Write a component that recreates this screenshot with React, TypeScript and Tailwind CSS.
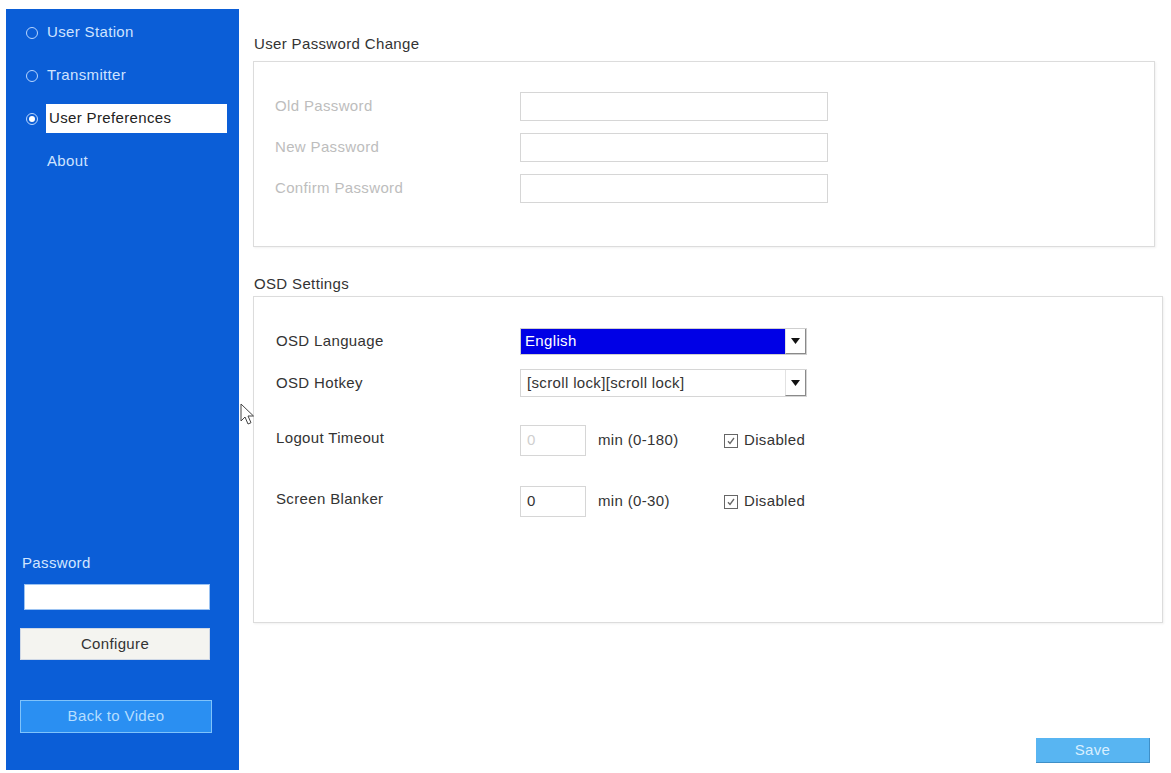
import { ReactNode } from 'react';

const FONT = { fontFamily: '"Liberation Sans", Arial, sans-serif', letterSpacing: '0.35px' };

interface NavItem {
  label: string;
  radio: boolean;
  active?: boolean;
}

const NAV: NavItem[] = [
  { label: 'User Station', radio: true },
  { label: 'Transmitter', radio: true },
  { label: 'User Preferences', radio: true, active: true },
  { label: 'About', radio: false },
];

function Radio({ checked }: { checked?: boolean }) {
  return (
    <span className="w-[12px] h-[12px] rounded-full border-[1.5px] border-[#b8d6ff] flex items-center justify-center shrink-0">
      {checked && <span className="w-[6px] h-[6px] rounded-full bg-white" />}
    </span>
  );
}

function Sidebar() {
  return (
    <div className="mt-[9px] ml-[6px] w-[233px] h-[761px] bg-[#0b5ed7] flex flex-col text-[15px]">
      <div className="flex flex-col pt-[2px]">
        {NAV.map((n) => (
          <div key={n.label} className="h-[43px] flex items-center pl-[20px] gap-[9px]">
            {n.radio ? <Radio checked={n.active} /> : <span className="w-[12px] shrink-0" />}
            {n.active ? (
              <span className="w-[181px] h-[29px] bg-white text-[#222] flex items-center pl-[3px] -ml-[1px]">
                {n.label}
              </span>
            ) : (
              <span className="text-[#cfe3ff]">{n.label}</span>
            )}
          </div>
        ))}
      </div>

      <div className="mt-auto pb-[37px] pl-[14px] flex flex-col items-start">
        <div className="text-[#d2e6ff] leading-[18px] ml-[2px]">Password</div>
        <div className="mt-[12px] ml-[4px] w-[186px] h-[26px] bg-white border border-[#9cc3f2]" />
        <button className="mt-[18px] w-[190px] h-[32px] bg-[#f4f4f0] border border-[#cfd8e6] text-[#333]">
          Configure
        </button>
        <button className="mt-[40px] w-[192px] h-[33px] bg-[#2a8ff2] border border-[#7fc3fb] text-[#b6deff]">
          Back to Video
        </button>
      </div>
    </div>
  );
}

function Box({
  title,
  width,
  height,
  gap,
  children,
}: {
  title: string;
  width: string;
  height: string;
  gap: string;
  children: ReactNode;
}) {
  return (
    <div className="flex flex-col">
      <div className="h-[20px] flex items-center text-[15px] text-[#333]">{title}</div>
      <div className={`${width} ${height} ${gap} -ml-[1px] border border-[#dcdcdc] shadow-[1px_1px_2px_rgba(0,0,0,0.06)] bg-white`}>
        {children}
      </div>
    </div>
  );
}

function TextField({ className = '', children }: { className?: string; children?: ReactNode }) {
  return (
    <div className={`border border-[#d6d6d6] bg-white flex items-center pl-[6px] ${className}`}>
      {children}
    </div>
  );
}

function Arrow() {
  return (
    <span className="w-[21px] h-full bg-white border-l border-[#e2e2e2] border-r border-b border-b-[#8a8a8a] border-r-[#8a8a8a] flex items-center justify-center">
      <svg width="9" height="6" viewBox="0 0 9 6">
        <path d="M0 0h9L4.5 6z" fill="#111" />
      </svg>
    </span>
  );
}

function CheckBox() {
  return (
    <span className="w-[14px] h-[14px] border border-[#666] bg-white flex items-center justify-center">
      <svg width="10" height="10" viewBox="0 0 10 10">
        <path d="M2 5.2l2 2.3L8 2" stroke="#666" strokeWidth="1.3" fill="none" />
      </svg>
    </span>
  );
}

function Cursor() {
  return (
    <svg className="absolute left-[240px] top-[403px]" width="14" height="22" viewBox="0 0 14 22">
      <path d="M1 1v17l4-4 3 7 3-1.3-3-6.7h5.5z" fill="white" stroke="#444" strokeWidth="1" strokeLinejoin="round" />
    </svg>
  );
}

export default function App() {
  return (
    <div className="relative w-[1171px] h-[773px] bg-white flex overflow-hidden text-[15px]" style={FONT}>
      <Sidebar />

      <div className="flex-1 pl-[15px] pt-[34px] flex flex-col">
        <Box title="User Password Change" width="w-[902px]" height="h-[186px]" gap="mt-[7px]">
          <div className="pt-[30px] pl-[21px] flex flex-col gap-[12px]">
            {['Old Password', 'New Password', 'Confirm Password'].map((l) => (
              <div key={l} className="flex items-center h-[29px]">
                <span className="w-[245px] text-[#bdbdbd]">{l}</span>
                <TextField className="w-[308px] h-[29px]" />
              </div>
            ))}
          </div>
        </Box>

        <div className="mt-[27px]">
          <Box title="OSD Settings" width="w-[910px]" height="h-[327px]" gap="mt-[2px]">
            <div className="pt-[31px] pl-[22px] flex flex-col text-[#333]">
              <div className="flex items-center h-[27px]">
                <span className="w-[244px]">OSD Language</span>
                <div className="w-[287px] h-[27px] flex border border-[#cfcfcf]">
                  <span className="flex-1 bg-[#0000e6] text-white flex items-center pl-[4px]">English</span>
                  <Arrow />
                </div>
              </div>
              <div className="flex items-center h-[28px] mt-[14px]">
                <span className="w-[244px]">OSD Hotkey</span>
                <div className="w-[287px] h-[28px] flex border border-[#d6d6d6]">
                  <span className="flex-1 bg-white flex items-center pl-[6px]">[scroll lock][scroll lock]</span>
                  <Arrow />
                </div>
              </div>
              {[
                { label: 'Logout Timeout', range: 'min (0-180)', dim: true },
                { label: 'Screen Blanker', range: 'min (0-30)', dim: false },
              ].map((r, i) => (
                <div key={r.label} className={`flex items-center h-[31px] ${i === 0 ? 'mt-[28px]' : 'mt-[30px]'}`}>
                  <span className="w-[244px] -mt-[4px]">{r.label}</span>
                  <TextField className={`w-[66px] h-[31px] ${r.dim ? 'text-[#cfcfcf]' : 'text-[#333]'}`}>0</TextField>
                  <span className="ml-[12px] w-[126px]">{r.range}</span>
                  <CheckBox />
                  <span className="ml-[6px]">Disabled</span>
                </div>
              ))}
            </div>
          </Box>
        </div>

        <div className="mt-auto mb-[10px] self-end mr-[21px]">
          <button className="w-[114px] h-[25px] bg-[#58b5f2] border-b border-r border-[#3f8fc7] text-[#d8efff]">
            Save
          </button>
        </div>
      </div>

      <Cursor />
    </div>
  );
}
